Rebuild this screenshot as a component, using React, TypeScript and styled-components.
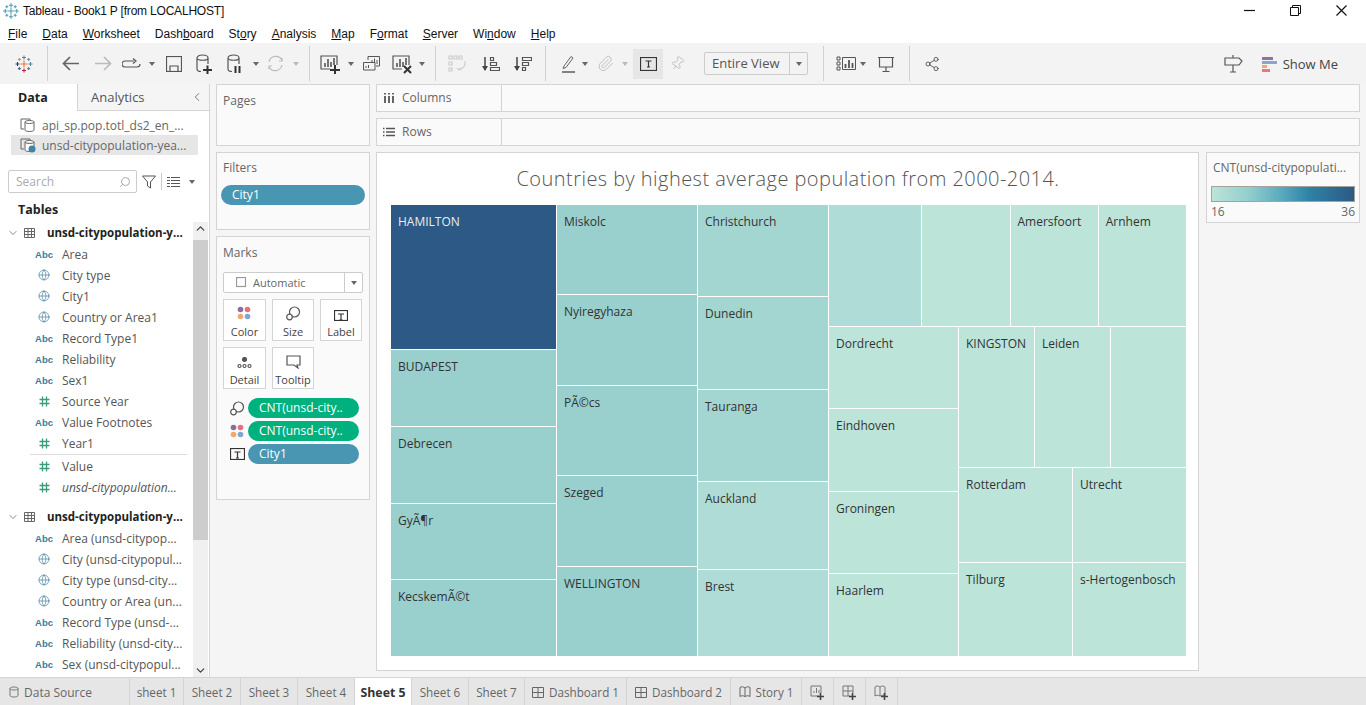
import React from 'react';
import styled, { createGlobalStyle } from 'styled-components';
import { ChevronDown, ChevronLeft, ChevronUp, Globe, Paperclip, Pin, Search, Share2 } from 'lucide-react';

const GlobalStyle = createGlobalStyle`
  html, body { margin: 0; padding: 0; height: 100%; overflow: hidden; }
  body { font-family: "Open Sans", "Liberation Sans", sans-serif; background: #f5f5f5; }
`;

const Page = styled.div`
  width: 1366px;
  height: 705px;
  display: flex;
  flex-direction: column;
  overflow: hidden;
`;

const TitleBar = styled.div`
  height: 24px;
  background: #fff;
  display: flex;
  align-items: center;
  padding: 0 0 2px 3px;
  box-sizing: border-box;
  gap: 4px;
  font: 12px "Liberation Sans", sans-serif;
  letter-spacing: -0.2px;
  color: #111;
`;

const WindowButtons = styled.div`
  margin: 0 2px 2px auto;
  display: flex;
  align-items: center;
`;

const WindowButton = styled.div`
  width: 46px;
  display: flex;
  justify-content: center;
`;

const MenuBar = styled.div`
  height: 19px;
  background: #fff;
  display: flex;
  align-items: center;
  padding-left: 8px;
  gap: 15px;
  font: 12px "Liberation Sans", sans-serif;
  color: #111;
  u { text-underline-offset: 1px; }
`;

const Toolbar = styled.div`
  height: 41px;
  background: #f3f3f3;
  display: flex;
  align-items: center;
  color: #555;
  flex-shrink: 0;
`;

const Slot = styled.div<{ $w: number; $ml?: number }>`
  width: ${p => p.$w}px;
  margin-left: ${p => p.$ml ?? 0}px;
  display: flex;
  align-items: center;
  justify-content: center;
  flex-shrink: 0;
`;

const ToolSep = styled.div<{ $ml?: number }>`
  width: 1px;
  height: 35px;
  margin-left: ${p => p.$ml ?? 0}px;
  background: #d0d0d0;
  flex-shrink: 0;
`;

const Caret = styled.span<{ $off?: boolean }>`
  flex-shrink: 0;
  width: 0;
  height: 0;
  border-left: 3.5px solid transparent;
  border-right: 3.5px solid transparent;
  border-top: 4px solid ${p => (p.$off ? '#bbb' : '#666')};
`;

const ActiveTool = styled.div`
  width: 30px;
  height: 30px;
  margin-left: 4px;
  background: #e6e6e6;
  display: flex;
  align-items: center;
  justify-content: center;
  flex-shrink: 0;
`;

const ViewSelect = styled.div`
  width: 104px;
  height: 23px;
  margin-left: 13px;
  border: 1px solid #ccc;
  border-radius: 2px;
  display: flex;
  align-items: center;
  box-sizing: border-box;
  flex-shrink: 0;
`;

const ViewText = styled.div`
  flex: 1;
  height: 100%;
  padding-left: 7px;
  border-right: 1px solid #ccc;
  font-size: 13px;
  line-height: 21px;
  color: #555;
`;

const ViewCaret = styled.div`
  width: 17px;
  display: flex;
  justify-content: center;
`;

const RightTools = styled.div`
  margin-left: auto;
  padding-right: 28px;
  display: flex;
  align-items: center;
  gap: 19px;
`;

const ShowMe = styled.div`
  display: flex;
  align-items: center;
  gap: 6px;
  font-size: 13px;
  color: #444;
`;

const TiltedPin = styled(Pin)`
  transform: rotate(35deg);
`;

const Workspace = styled.div`
  flex: 1;
  display: flex;
  min-height: 0;
  background: #f5f5f5;
`;

const DataPane = styled.div`
  width: 210px;
  background: #fff;
  border-right: 1px solid #d4d4d4;
  display: flex;
  flex-direction: column;
  flex-shrink: 0;
  box-sizing: border-box;
  overflow: hidden;
`;

const PaneTabs = styled.div`
  height: 27px;
  display: flex;
  align-items: stretch;
  flex-shrink: 0;
`;

const PaneTab = styled.div<{ $active?: boolean }>`
  box-sizing: border-box;
  width: ${p => (p.$active ? '77px' : 'auto')};
  flex: ${p => (p.$active ? 'none' : 1)};
  background: ${p => (p.$active ? '#fff' : '#f5f5f5')};
  border-bottom: ${p => (p.$active ? 'none' : '1px solid #d4d4d4')};
  border-left: ${p => (p.$active ? 'none' : '1px solid #d4d4d4')};
  display: flex;
  align-items: center;
  padding-left: ${p => (p.$active ? '18px' : '13px')};
  padding-right: 5px;
  font-size: ${p => (p.$active ? '12.5px' : '13px')};
  font-weight: ${p => (p.$active ? 700 : 400)};
  color: ${p => (p.$active ? '#222' : '#555')};
  justify-content: space-between;
`;

const Sources = styled.div`
  padding: 4px 11px 0 11px;
  display: flex;
  flex-direction: column;
`;

const Source = styled.div<{ $active?: boolean }>`
  height: 20px;
  display: flex;
  align-items: center;
  gap: 6px;
  padding-left: 9px;
  background: ${p => (p.$active ? '#e6e6e6' : 'transparent')};
  font-size: 12px;
  color: #666;
  white-space: nowrap;
`;

const SearchRow = styled.div`
  display: flex;
  align-items: center;
  padding: 15px 0 0 8px;
  gap: 5px;
  color: #555;
`;

const SearchBox = styled.div`
  width: 129px;
  height: 23px;
  box-sizing: border-box;
  border: 1px solid #ccc;
  border-radius: 2px;
  display: flex;
  align-items: center;
  justify-content: space-between;
  padding: 0 5px 0 7px;
  font-size: 12px;
  color: #aaa;
`;

const MirroredSearch = styled(Search)`
  transform: scaleX(-1);
`;

const SearchDivider = styled.div`
  width: 1px;
  height: 17px;
  background: #ccc;
`;

const ListCaret = styled(Caret)`
  margin-left: 4px;
`;

const TablesTitle = styled.div`
  font-size: 12.5px;
  font-weight: 700;
  color: #222;
  padding: 8px 0 4px 18px;
`;

const FieldArea = styled.div`
  flex: 1;
  display: flex;
  min-height: 0;
`;

const FieldList = styled.div`
  flex: 1;
  min-width: 0;
  overflow: hidden;
`;

const TableHead = styled.div<{ $gap?: number }>`
  height: 21px;
  margin-top: ${p => p.$gap ?? 0}px;
  display: flex;
  align-items: center;
  font-size: 11.5px;
  font-weight: 700;
  color: #222;
  padding-left: 7px;
  white-space: nowrap;
  svg:first-child { margin-right: 5px; color: #888; }
  svg:nth-child(2) { margin-right: 12px; }
`;

const FieldRow = styled.div<{ $italic?: boolean; $rule?: boolean }>`
  height: ${p => (p.$rule ? '23px' : '21px')};
  box-sizing: border-box;
  display: flex;
  align-items: center;
  font-size: 12px;
  color: #555;
  font-style: ${p => (p.$italic ? 'italic' : 'normal')};
  white-space: nowrap;
  margin-left: 30px;
  margin-right: 6px;
  padding-top: 1px;
  padding-bottom: ${p => (p.$rule ? '1px' : '0')};
  border-bottom: ${p => (p.$rule ? '1px solid #ddd' : 'none')};
`;

const TypeIcon = styled.span<{ $kind: string }>`
  width: 32px;
  flex-shrink: 0;
  display: flex;
  justify-content: center;
  padding-right: 4px;
  box-sizing: border-box;
  font-family: "Liberation Sans", sans-serif;
  font-size: 9.5px;
  font-style: normal;
  font-weight: ${p => (p.$kind === 'abc' ? 700 : 400)};
  color: ${p => (p.$kind === 'num' ? '#3d9b7c' : '#3d7a98')};
`;

const Scrollbar = styled.div`
  width: 15px;
  margin-right: 1px;
  background: #f0f0f0;
  display: flex;
  flex-direction: column;
  align-items: center;
  justify-content: space-between;
  color: #444;
  position: relative;
`;

const ScrollThumb = styled.div`
  position: absolute;
  top: 18px;
  left: 0;
  width: 15px;
  height: 300px;
  background: #cdcdcd;
`;

const ShelfPane = styled.div`
  width: 166px;
  padding: 0 6px;
  box-sizing: border-box;
  display: flex;
  flex-direction: column;
  gap: 6px;
  flex-shrink: 0;
`;

const Card = styled.div<{ $h: number; $pt?: number }>`
  height: ${p => p.$h}px;
  background: #fafafa;
  border: 1px solid #d4d4d4;
  box-sizing: border-box;
  padding: ${p => p.$pt ?? 7}px 6px 6px;
  font-size: 12px;
  color: #666;
  flex-shrink: 0;
`;

const Pill = styled.div<{ $green?: boolean; $w: number }>`
  width: ${p => p.$w}px;
  height: 20px;
  border-radius: 10px;
  background: ${p => (p.$green ? '#00b180' : '#4996b2')};
  color: #fff;
  font-size: 12px;
  line-height: 20px;
  padding-left: 11px;
  box-sizing: border-box;
  white-space: nowrap;
  overflow: hidden;
`;

const FilterPill = styled(Pill)`
  margin: 9px 0 0 -2px;
`;

const MarkType = styled.div`
  height: 21px;
  width: 140px;
  margin-top: 11px;
  border: 1px solid #ccc;
  border-radius: 2px;
  background: #fff;
  display: flex;
  align-items: center;
  box-sizing: border-box;
  font-size: 11px;
  color: #666;
  gap: 6px;
  padding-left: 12px;
`;

const MarkCaret = styled.div`
  margin-left: auto;
  width: 17px;
  height: 100%;
  border-left: 1px solid #ccc;
  display: flex;
  align-items: center;
  justify-content: center;
`;

const MarkGrid = styled.div`
  margin-top: 6px;
  display: grid;
  grid-template-columns: 43px 42px 42px;
  grid-auto-rows: 42px;
  gap: 6px;
`;

const MarkCell = styled.div`
  border: 1px solid #d4d4d4;
  background: #fff;
  display: flex;
  flex-direction: column;
  align-items: center;
  justify-content: flex-end;
  gap: 3px;
  padding-bottom: 1px;
  font-size: 11px;
  color: #444;
  box-sizing: border-box;
`;

const PillRow = styled.div<{ $first?: boolean }>`
  display: flex;
  align-items: center;
  gap: 3px;
  margin-top: ${p => (p.$first ? '9px' : '3px')};
  padding-left: 7px;
  color: #555;
`;

const MainArea = styled.div`
  flex: 1;
  min-width: 0;
  display: flex;
  flex-direction: column;
  gap: 6px;
  padding: 0 6px 6px 0;
`;

const ShelfRow = styled.div`
  height: 28px;
  background: #fafafa;
  border: 1px solid #d4d4d4;
  display: flex;
  flex-shrink: 0;
  box-sizing: border-box;
`;

const ShelfLabel = styled.div`
  width: 125px;
  border-right: 1px solid #d4d4d4;
  display: flex;
  align-items: center;
  gap: 7px;
  padding: 0 0 1px 6px;
  font-size: 12px;
  color: #666;
  box-sizing: border-box;
`;

const ViewRow = styled.div`
  flex: 1;
  display: flex;
  gap: 7px;
  min-height: 0;
`;

const Canvas = styled.div`
  width: 823px;
  background: #fff;
  border: 1px solid #d4d4d4;
  box-sizing: border-box;
  display: flex;
  flex-direction: column;
  padding: 0 13px 0 14px;
`;

const ChartTitle = styled.div`
  height: 52px;
  text-align: center;
  font-size: 20px;
  font-weight: 300;
  letter-spacing: 0.45px;
  line-height: 51px;
  color: #555;
  flex-shrink: 0;
  white-space: nowrap;
`;

const Treemap = styled.div`
  display: flex;
  gap: 1px;
  height: 451px;
  width: 795px;
`;

const Column = styled.div<{ $w: number }>`
  width: ${p => p.$w}px;
  display: flex;
  flex-direction: column;
  gap: 1px;
  flex-shrink: 0;
`;

const TileRow = styled.div<{ $h: number }>`
  height: ${p => p.$h}px;
  display: flex;
  gap: 1px;
  flex-shrink: 0;
`;

const Tile = styled.div<{ $bg: string; $size?: number; $light?: boolean }>`
  flex: ${p => p.$size ?? 1} 0 0;
  min-width: 0;
  background: ${p => p.$bg};
  color: ${p => (p.$light ? '#e8eef2' : '#333')};
  font-size: 12px;
  padding: 8px 7px;
  box-sizing: border-box;
  white-space: nowrap;
  overflow: hidden;
`;

const Legend = styled.div`
  width: 154px;
  height: 71px;
  background: #fafafa;
  border: 1px solid #d4d4d4;
  box-sizing: border-box;
  padding: 6px 4px 0;
  font-size: 12px;
  color: #666;
  flex-shrink: 0;
`;

const LegendTitle = styled.div`
  white-space: nowrap;
  padding-left: 2px;
`;

const LegendRamp = styled.div`
  height: 16px;
  margin-top: 10px;
  border: 1px solid #a3a39b;
  box-sizing: border-box;
  background: linear-gradient(90deg, #bce4d8, #94cfcf 25%, #57a8bc 50%, #2f83a6 68%, #2c5985);
`;

const LegendEnds = styled.div`
  display: flex;
  justify-content: space-between;
  margin-top: 1px;
`;

const TabBar = styled.div`
  height: 28px;
  background: #e6e6e6;
  border-top: 1px solid #d4d4d4;
  box-sizing: border-box;
  display: flex;
  flex-shrink: 0;
`;

const SheetTab = styled.div<{ $w: number; $active?: boolean; $first?: boolean }>`
  width: ${p => p.$w}px;
  box-sizing: border-box;
  border-right: 1px solid #d4d4d4;
  background: ${p => (p.$active ? '#fff' : 'transparent')};
  font-size: ${p => (p.$first ? '12px' : p.$active ? '12.3px' : '11.7px')};
  font-weight: ${p => (p.$active ? 700 : 400)};
  color: ${p => (p.$active ? '#333' : '#666')};
  display: flex;
  align-items: center;
  justify-content: ${p => (p.$first ? 'flex-start' : 'center')};
  padding: 1px 0 0 ${p => (p.$first ? '9px' : '0')};
  gap: 5px;
  white-space: nowrap;
`;

// small inline drawings, the icon packages have nothing close for these tableau glyphs
const Svg = ({ w = 18, h = 18, children, c = '#555' }: { w?: number; h?: number; c?: string; children: React.ReactNode }) => (
  <svg width={w} height={h} viewBox={`0 0 ${w} ${h}`} fill="none" stroke={c} strokeWidth="1.2">
    {children}
  </svg>
);

const Logo = ({ size = 18, bright = false }: { size?: number; bright?: boolean }) => {
  const cols = bright ? ['#e8762d', '#5b879b', '#c72035', '#1f447a', '#59879b', '#eb912b', '#7099a6', '#5b6591'] : Array(8).fill('#4f9fb5');
  const m = size / 2;
  const a = size * 0.36;
  const b = size * 0.2;
  const cross = (x: number, y: number, r: number, col: string, k: number) => (
    <path key={k} d={`M${x - r} ${y}H${x + r}M${x} ${y - r}V${y + r}`} stroke={col} strokeWidth="1.1" />
  );
  return (
    <svg width={size} height={size} viewBox={`0 0 ${size} ${size}`}>
      {cross(m, m, 3.5, cols[0], 0)}
      {cross(m, m - a, 2, cols[1], 1)}
      {cross(m, m + a, 2, cols[2], 2)}
      {cross(m - a, m, 2, cols[3], 3)}
      {cross(m + a, m, 2, cols[4], 4)}
      {cross(m - b - 1, m - b - 1, 1.5, cols[5], 5)}
      {cross(m + b + 1, m - b - 1, 1.5, cols[6], 6)}
      {cross(m - b - 1, m + b + 1, 1.5, cols[7], 7)}
      {cross(m + b + 1, m + b + 1, 1.5, cols[1], 8)}
    </svg>
  );
};

const Cylinder = ({ badge }: { badge: 'plus' | 'pause' }) => (
  <Svg w={20} h={20}>
    <path d="M2 4c0-4 11-4 11 0v6M2 4c0 3 11 3 11 0M2 4v11c0 1.5 2 2.5 4 2.5" />
    {badge === 'plus' ? (
      <path d="M8 16h9M12.5 11.5v9" stroke="#333" strokeWidth="2" />
    ) : (
      <path d="M9.5 12v7M13.5 12v7" stroke="#333" strokeWidth="2" />
    )}
  </Svg>
);

const BarsIcon = ({ badge }: { badge?: 'plus' | 'x' }) => (
  <Svg w={21} h={20}>
    <path d="M10 15H1V2h16v9" />
    <path d="M5 13V9M8 13V5M11 13V8M14 11V4" strokeWidth="1.6" />
    {badge === 'plus' && <path d="M10 16h10M15 11v9" stroke="#333" strokeWidth="2" />}
    {badge === 'x' && <path d="M12 12l7 7M19 12l-7 7" stroke="#333" strokeWidth="2" />}
  </Svg>
);

const SortIcon = ({ desc }: { desc?: boolean }) => (
  <Svg w={19} h={16}>
    <path d="M4 1v13" stroke="#444" strokeWidth="1.5" />
    <path d="M1 10l3 5 3-5z" fill="#444" stroke="none" />
    {desc ? (
      <path d="M9.5 1.5h9v3h-9zM9.5 6.5h6v3h-6zM9.5 11.5h3v3h-3z" />
    ) : (
      <path d="M9.5 1.5h3v3h-3zM9.5 6.5h6v3h-6zM9.5 11.5h9v3h-9z" />
    )}
  </Svg>
);

const TextBox = ({ s = 16 }: { s?: number }) => (
  <Svg w={s} h={s - 3} c="#333">
    <rect x=".5" y=".5" width={s - 1} height={s - 4} />
    <path d={`M${s / 2 - 3} 4h6M${s / 2} 4v6M${s / 2 - 1.5} 10h3`} />
  </Svg>
);

const DotsIcon = () => (
  <svg width="15" height="15" viewBox="0 0 15 15">
    <circle cx="3.5" cy="3.5" r="2.8" fill="#8a6f9b" />
    <circle cx="10.5" cy="3.5" r="2.8" fill="#e8707e" />
    <circle cx="3.5" cy="10.5" r="2.8" fill="#f1a673" />
    <circle cx="10.5" cy="10.5" r="2.8" fill="#7fa6cf" />
  </svg>
);

const SizeIcon = () => (
  <Svg w={15} h={15} c="#555">
    <circle cx="8.5" cy="6" r="5" />
    <circle cx="3.5" cy="11" r="2.8" fill="#fff" />
  </Svg>
);

const SourceIcon = ({ check }: { check?: boolean }) => (
  <Svg w={16} h={16} c="#666">
    <path d="M1 2h9M1 2v10h3M10 2v2" strokeWidth="1" />
    <path d="M5 5c0-2 9-2 9 0v8c0 2-9 2-9 0zM5 5c0 2 9 2 9 0" strokeWidth="1" fill="#fff" />
    {check && <circle cx="12" cy="12" r="3.5" fill="#3d84a8" stroke="none" />}
  </Svg>
);

const TableIcon = () => (
  <Svg w={11} h={10} c="#666">
    <path d="M.5.5h10v9H.5zM.5 3.5h10M.5 6.5h10M4 .5v9M7.5.5v9" strokeWidth="1" />
  </Svg>
);

const HashIcon = () => (
  <Svg w={11} h={11} c="#3d9b7c">
    <path d="M3.5 .5v10M7.5 .5v10M.5 3.5h10M.5 7.5h10" strokeWidth="1.3" />
  </Svg>
);

const DashIcon = () => (
  <Svg w={12} h={11} c="#666">
    <path d="M.5.5h11v10H.5zM.5 5.5h11M6 .5v10" strokeWidth="1" />
  </Svg>
);

const StoryIcon = () => (
  <Svg w={12} h={12} c="#666">
    <path d="M6 2C4.5.5 2 .5 1 1.5v9c1-1 3.5-1 5 0 1.5-1 4-1 5 0v-9C10 .5 7.5.5 6 2zM6 2v8.5" strokeWidth="1" />
  </Svg>
);

type FieldKind = 'abc' | 'geo' | 'num';

const KindIcon = ({ kind }: { kind: FieldKind }) => (
  <TypeIcon $kind={kind}>
    {kind === 'abc' && 'Abc'}
    {kind === 'geo' && <Globe size={12} strokeWidth={1.3} />}
    {kind === 'num' && <HashIcon />}
  </TypeIcon>
);

const tableOne: [FieldKind, string][] = [
  ['abc', 'Area'],
  ['geo', 'City type'],
  ['geo', 'City1'],
  ['geo', 'Country or Area1'],
  ['abc', 'Record Type1'],
  ['abc', 'Reliability'],
  ['abc', 'Sex1'],
  ['num', 'Source Year'],
  ['abc', 'Value Footnotes'],
];

const tableTwo: [FieldKind, string][] = [
  ['abc', 'Area (unsd-citypop...'],
  ['geo', 'City (unsd-citypopul...'],
  ['geo', 'City type (unsd-city...'],
  ['geo', 'Country or Area (un...'],
  ['abc', 'Record Type (unsd-...'],
  ['abc', 'Reliability (unsd-city...'],
  ['abc', 'Sex (unsd-citypopul...'],
];

const LIGHT = '#bce4d9';
const MID = '#afdcd6';
const SOFT = '#a3d5d1';
const TEAL = '#99cfcd';

const menus: [string, string, string][] = [
  ['', 'F', 'ile'],
  ['', 'D', 'ata'],
  ['', 'W', 'orksheet'],
  ['Dash', 'b', 'oard'],
  ['St', 'o', 'ry'],
  ['', 'A', 'nalysis'],
  ['', 'M', 'ap'],
  ['F', 'o', 'rmat'],
  ['', 'S', 'erver'],
  ['Wi', 'n', 'dow'],
  ['', 'H', 'elp'],
];

export default function App() {
  return (
    <Page>
      <GlobalStyle />
      <TitleBar>
        <Logo size={16} />
        <span>Tableau - Book1 P [from LOCALHOST]</span>
        <WindowButtons>
          <WindowButton>
            <Svg w={11} h={11} c="#111">
              <path d="M0 5.5h11" />
            </Svg>
          </WindowButton>
          <WindowButton>
            <Svg w={11} h={11} c="#111">
              <path d="M.5 2.5h8v8h-8zM2.5 2.5V.5h8v8H8.5" strokeWidth="1" />
            </Svg>
          </WindowButton>
          <WindowButton>
            <Svg w={11} h={11} c="#111">
              <path d="M.5.5l10 10M10.5.5l-10 10" />
            </Svg>
          </WindowButton>
        </WindowButtons>
      </TitleBar>
      <MenuBar>
        {menus.map(([a, b, c]) => (
          <span key={a + b + c}>
            {a}
            <u>{b}</u>
            {c}
          </span>
        ))}
      </MenuBar>
      <Toolbar>
        <Slot $w={47}>
          <Logo size={18} bright />
        </Slot>
        <ToolSep />
        <Slot $w={44}>
          <Svg w={17} h={15} c="#666">
            <path d="M17 7.5H1.5M8 1L1.5 7.5 8 14" strokeWidth="1.7" />
          </Svg>
        </Slot>
        <Slot $w={22}>
          <Svg w={17} h={15} c="#bbb">
            <path d="M0 7.5h15.5M9 1l6.5 6.5L9 14" strokeWidth="1.7" />
          </Svg>
        </Slot>
        <Slot $w={34}>
          <Svg w={19} h={12}>
            <path d="M12 3H3a3 3 0 0 0 0 6h12a3 3 0 0 0 3-3M11 .5l3 2.5-3 2.5" />
          </Svg>
        </Slot>
        <Slot $w={8}>
          <Caret />
        </Slot>
        <Slot $w={36}>
          <Svg w={16} h={16}>
            <rect x=".5" y=".5" width="15" height="15" />
            <path d="M4 15v-5h8v5" />
          </Svg>
        </Slot>
        <Slot $w={26}>
          <Cylinder badge="plus" />
        </Slot>
        <Slot $w={36}>
          <Cylinder badge="pause" />
        </Slot>
        <Slot $w={4}>
          <Caret />
        </Slot>
        <Slot $w={34}>
          <Svg w={17} h={17} c="#bbb">
            <path d="M2 7a7 7 0 0 1 13-2M15 3v3h-3M15 10a7 7 0 0 1-13 2M2 14v-3h3" />
          </Svg>
        </Slot>
        <Slot $w={8}>
          <Caret $off />
        </Slot>
        <ToolSep $ml={9} />
        <Slot $w={40}>
          <BarsIcon badge="plus" />
        </Slot>
        <Slot $w={2}>
          <Caret />
        </Slot>
        <Slot $w={38}>
          <Svg w={17} h={16}>
            <path d="M5 4V.5h11.5V10H13M.5 6.5h11.5V14H.5z" strokeWidth="1" />
            <path d="M9 7V4M11.5 7V2.5M14 8V4M3 12v-2M5.5 12V9" strokeWidth="1" />
          </Svg>
        </Slot>
        <Slot $w={24}>
          <BarsIcon badge="x" />
        </Slot>
        <Slot $w={16}>
          <Caret />
        </Slot>
        <ToolSep $ml={5} />
        <Slot $w={44}>
          <Svg w={20} h={18} c="#ccc">
            <path d="M1 1h3v3H1zM6 1h3v3H6zM11 1h3v3h-3zM1 7h3v3H1zM1 13h3v3H1zM17 6c1 4-1 7-6 9M9 13l2 2 2-2" />
          </Svg>
        </Slot>
        <Slot $w={20}>
          <SortIcon />
        </Slot>
        <Slot $w={45}>
          <SortIcon desc />
        </Slot>
        <ToolSep />
        <Slot $w={26} $ml={9}>
          <Svg w={13} h={18} c="#666">
            <path d="M2 11l7-9.5 2 1.5-7 9.5-3 1z" strokeWidth="1" />
            <path d="M0 17h13" strokeWidth="1.6" />
          </Svg>
        </Slot>
        <Slot $w={8}>
          <Caret />
        </Slot>
        <Slot $w={32}>
          <Paperclip size={17} color="#bbb" strokeWidth={1.3} />
        </Slot>
        <Slot $w={8}>
          <Caret $off />
        </Slot>
        <ActiveTool>
          <TextBox s={17} />
        </ActiveTool>
        <Slot $w={28}>
          <TiltedPin size={15} color="#bbb" strokeWidth={1.3} />
        </Slot>
        <ViewSelect>
          <ViewText>Entire View</ViewText>
          <ViewCaret>
            <Caret />
          </ViewCaret>
        </ViewSelect>
        <ToolSep $ml={15} />
        <Slot $w={20} $ml={12}>
          <Svg w={20} h={15}>
            <path d="M1 1h3v3H1zM1 6h3v3H1zM1 11h3v3H1zM6.5 1.5h13v12h-13z" strokeWidth="1" />
            <path d="M9.5 12V8M13 12V4M16.5 12V7" strokeWidth="1.8" />
          </Svg>
        </Slot>
        <Slot $w={8} $ml={3}>
          <Caret />
        </Slot>
        <Slot $w={37}>
          <Svg w={16} h={16}>
            <path d="M0 1.5h16M1.5 1.5V11h13V1.5M8 11v4M4.5 15.5h7" />
          </Svg>
        </Slot>
        <ToolSep $ml={5} />
        <Slot $w={44}>
          <Share2 size={16} strokeWidth={1.2} color="#444" />
        </Slot>
        <RightTools>
          <Svg w={19} h={18}>
            <path d="M1 3h14l3 3-3 4H1zM9 0v3M9 10v7M6 17h6" />
          </Svg>
          <ShowMe>
            <svg width="15" height="16" viewBox="0 0 15 16">
              <rect x="0" y="1" width="11" height="3" fill="#8a74a0" />
              <rect x="0" y="5" width="15" height="3" fill="#86a8d0" />
              <rect x="0" y="9" width="5" height="3" fill="#f1a673" />
              <rect x="0" y="13" width="8" height="3" fill="#ee7480" />
            </svg>
            Show Me
          </ShowMe>
        </RightTools>
      </Toolbar>
      <Workspace>
        <DataPane>
          <PaneTabs>
            <PaneTab $active>Data</PaneTab>
            <PaneTab>
              Analytics
              <ChevronLeft size={14} strokeWidth={1.3} />
            </PaneTab>
          </PaneTabs>
          <Sources>
            <Source>
              <SourceIcon />
              api_sp.pop.totl_ds2_en_...
            </Source>
            <Source $active>
              <SourceIcon check />
              unsd-citypopulation-yea...
            </Source>
          </Sources>
          <SearchRow>
            <SearchBox>
              Search
              <MirroredSearch size={12} />
            </SearchBox>
            <Svg w={14} h={14}>
              <path d="M.5 1h13L8.5 7v6L5.5 11V7z" strokeWidth="1" />
            </Svg>
            <SearchDivider />
            <Svg w={13} h={11}>
              <path d="M0 1.5h3M4 1.5h9M0 4.5h3M4 4.5h9M0 7.5h3M4 7.5h9M0 10.5h3M4 10.5h9" strokeWidth="1" />
            </Svg>
            <ListCaret />
          </SearchRow>
          <TablesTitle>Tables</TablesTitle>
          <FieldArea>
            <FieldList>
              <TableHead>
                <ChevronDown size={12} />
                <TableIcon />
                unsd-citypopulation-y...
              </TableHead>
              {tableOne.map(([k, n]) => (
                <FieldRow key={n}>
                  <KindIcon kind={k} />
                  {n}
                </FieldRow>
              ))}
              <FieldRow $rule>
                <KindIcon kind="num" />
                Year1
              </FieldRow>
              <FieldRow>
                <KindIcon kind="num" />
                Value
              </FieldRow>
              <FieldRow $italic>
                <KindIcon kind="num" />
                unsd-citypopulation...
              </FieldRow>
              <TableHead $gap={9}>
                <ChevronDown size={12} />
                <TableIcon />
                unsd-citypopulation-y...
              </TableHead>
              {tableTwo.map(([k, n]) => (
                <FieldRow key={n}>
                  <KindIcon kind={k} />
                  {n}
                </FieldRow>
              ))}
            </FieldList>
            <Scrollbar>
              <ScrollThumb />
              <ChevronUp size={13} strokeWidth={2.4} />
              <ChevronDown size={13} strokeWidth={2.4} />
            </Scrollbar>
          </FieldArea>
        </DataPane>
        <ShelfPane>
          <Card $h={62}>Pages</Card>
          <Card $h={78} $pt={6}>
            Filters
            <FilterPill $w={144}>City1</FilterPill>
          </Card>
          <Card $h={264}>
            Marks
            <MarkType>
              <Svg w={11} h={11} c="#999">
                <rect x=".5" y=".5" width="9" height="9" />
              </Svg>
              Automatic
              <MarkCaret>
                <Caret />
              </MarkCaret>
            </MarkType>
            <MarkGrid>
              <MarkCell>
                <DotsIcon />
                Color
              </MarkCell>
              <MarkCell>
                <SizeIcon />
                Size
              </MarkCell>
              <MarkCell>
                <TextBox s={14} />
                Label
              </MarkCell>
              <MarkCell>
                <Svg w={15} h={12} c="#555">
                  <circle cx="7.5" cy="2.5" r="2" fill="#555" />
                  <circle cx="2.5" cy="9" r="1.5" />
                  <circle cx="7.5" cy="9" r="1.5" />
                  <circle cx="12.5" cy="9" r="1.5" />
                </Svg>
                Detail
              </MarkCell>
              <MarkCell>
                <Svg w={15} h={14} c="#555">
                  <path d="M1 1h13v9h-3l1 3-4-3H1z" />
                </Svg>
                Tooltip
              </MarkCell>
            </MarkGrid>
            <PillRow $first>
              <SizeIcon />
              <Pill $green $w={111}>
                CNT(unsd-city..
              </Pill>
            </PillRow>
            <PillRow>
              <DotsIcon />
              <Pill $green $w={111}>
                CNT(unsd-city..
              </Pill>
            </PillRow>
            <PillRow>
              <TextBox s={15} />
              <Pill $w={111}>City1</Pill>
            </PillRow>
          </Card>
        </ShelfPane>
        <MainArea>
          <ShelfRow>
            <ShelfLabel>
              <Svg w={12} h={10}>
                <path d="M2 0v1.5M2 3v7M6 0v1.5M6 3v7M10 0v1.5M10 3v7" strokeWidth="1.8" />
              </Svg>
              Columns
            </ShelfLabel>
          </ShelfRow>
          <ShelfRow>
            <ShelfLabel>
              <Svg w={12} h={10}>
                <path d="M0 1.5h1.5M3 1.5h9M0 5h1.5M3 5h9M0 8.5h1.5M3 8.5h9" strokeWidth="1.6" />
              </Svg>
              Rows
            </ShelfLabel>
          </ShelfRow>
          <ViewRow>
            <Canvas>
              <ChartTitle>Countries by highest average population from 2000-2014.</ChartTitle>
              <Treemap>
                <Column $w={165}>
                  <TileRow $h={144}>
                    <Tile $bg="#2c5985" $light>
                      HAMILTON
                    </Tile>
                  </TileRow>
                  <TileRow $h={76}>
                    <Tile $bg={TEAL}>BUDAPEST</Tile>
                  </TileRow>
                  <TileRow $h={76}>
                    <Tile $bg={TEAL}>Debrecen</Tile>
                  </TileRow>
                  <TileRow $h={75}>
                    <Tile $bg={TEAL}>GyÃ¶r</Tile>
                  </TileRow>
                  <TileRow $h={76}>
                    <Tile $bg={TEAL}>KecskemÃ©t</Tile>
                  </TileRow>
                </Column>
                <Column $w={140}>
                  <TileRow $h={89}>
                    <Tile $bg={TEAL}>Miskolc</Tile>
                  </TileRow>
                  <TileRow $h={90}>
                    <Tile $bg={TEAL}>Nyiregyhaza</Tile>
                  </TileRow>
                  <TileRow $h={89}>
                    <Tile $bg={TEAL}>PÃ©cs</Tile>
                  </TileRow>
                  <TileRow $h={90}>
                    <Tile $bg={TEAL}>Szeged</Tile>
                  </TileRow>
                  <TileRow $h={89}>
                    <Tile $bg={TEAL}>WELLINGTON</Tile>
                  </TileRow>
                </Column>
                <Column $w={130}>
                  <TileRow $h={91}>
                    <Tile $bg={SOFT}>Christchurch</Tile>
                  </TileRow>
                  <TileRow $h={92}>
                    <Tile $bg={SOFT}>Dunedin</Tile>
                  </TileRow>
                  <TileRow $h={91}>
                    <Tile $bg={SOFT}>Tauranga</Tile>
                  </TileRow>
                  <TileRow $h={87}>
                    <Tile $bg={MID}>Auckland</Tile>
                  </TileRow>
                  <TileRow $h={86}>
                    <Tile $bg={MID}>Brest</Tile>
                  </TileRow>
                </Column>
                <Column $w={357}>
                  <TileRow $h={121}>
                    <Tile $bg={MID} $size={93} />
                    <Tile $bg={LIGHT} $size={87} />
                    <Tile $bg={LIGHT} $size={87}>Amersfoort</Tile>
                    <Tile $bg={LIGHT} $size={87}>Arnhem</Tile>
                  </TileRow>
                  <TileRow $h={329}>
                    <Column $w={129}>
                      <TileRow $h={81}>
                        <Tile $bg={LIGHT}>Dordrecht</Tile>
                      </TileRow>
                      <TileRow $h={82}>
                        <Tile $bg={LIGHT}>Eindhoven</Tile>
                      </TileRow>
                      <TileRow $h={81}>
                        <Tile $bg={LIGHT}>Groningen</Tile>
                      </TileRow>
                      <TileRow $h={82}>
                        <Tile $bg={LIGHT}>Haarlem</Tile>
                      </TileRow>
                    </Column>
                    <Column $w={227}>
                      <TileRow $h={140}>
                        <Tile $bg={LIGHT}>KINGSTON</Tile>
                        <Tile $bg={LIGHT}>Leiden</Tile>
                        <Tile $bg={LIGHT} />
                      </TileRow>
                      <TileRow $h={94}>
                        <Tile $bg={LIGHT}>Rotterdam</Tile>
                        <Tile $bg={LIGHT}>Utrecht</Tile>
                      </TileRow>
                      <TileRow $h={93}>
                        <Tile $bg={LIGHT}>Tilburg</Tile>
                        <Tile $bg={LIGHT}>s-Hertogenbosch</Tile>
                      </TileRow>
                    </Column>
                  </TileRow>
                </Column>
              </Treemap>
            </Canvas>
            <Legend>
              <LegendTitle>CNT(unsd-citypopulati...</LegendTitle>
              <LegendRamp />
              <LegendEnds>
                <span>16</span>
                <span>36</span>
              </LegendEnds>
            </Legend>
          </ViewRow>
        </MainArea>
      </Workspace>
      <TabBar>
        <SheetTab $w={130} $first>
          <Svg w={10} h={12} c="#777">
            <path d="M1 2.5c0-2 8-2 8 0v7c0 2-8 2-8 0zM1 2.5c0 2 8 2 8 0" strokeWidth="1" />
          </Svg>
          Data Source
        </SheetTab>
        <SheetTab $w={54}>sheet 1</SheetTab>
        <SheetTab $w={57}>Sheet 2</SheetTab>
        <SheetTab $w={57}>Sheet 3</SheetTab>
        <SheetTab $w={57}>Sheet 4</SheetTab>
        <SheetTab $w={57} $active>Sheet 5</SheetTab>
        <SheetTab $w={57}>Sheet 6</SheetTab>
        <SheetTab $w={56}>Sheet 7</SheetTab>
        <SheetTab $w={102}>
          <DashIcon />
          Dashboard 1
        </SheetTab>
        <SheetTab $w={104}>
          <DashIcon />
          Dashboard 2
        </SheetTab>
        <SheetTab $w={71}>
          <StoryIcon />
          Story 1
        </SheetTab>
        <SheetTab $w={32}>
          <Svg w={15} h={15} c="#777">
            <path d="M9 11H1V1h10v7M4 8V6M6.5 8V3M9 8V5" strokeWidth="1" />
            <path d="M7 11.5h7M10.5 8v7" stroke="#444" strokeWidth="1.6" />
          </Svg>
        </SheetTab>
        <SheetTab $w={32}>
          <Svg w={15} h={15} c="#777">
            <path d="M8 11H1V1h10v7M1 6h10M6 1v10" strokeWidth="1" />
            <path d="M7 11.5h7M10.5 8v7" stroke="#444" strokeWidth="1.6" />
          </Svg>
        </SheetTab>
        <SheetTab $w={32}>
          <Svg w={15} h={15} c="#777">
            <path d="M6 2C4 .5 2 1 1 2v9c1-1 3-1 5 0 2-1 4-1 5 0V2C10 1 8 .5 6 2zM6 2v9" strokeWidth="1" />
            <path d="M7 11.5h7M10.5 8v7" stroke="#444" strokeWidth="1.6" />
          </Svg>
        </SheetTab>
      </TabBar>
    </Page>
  );
}
